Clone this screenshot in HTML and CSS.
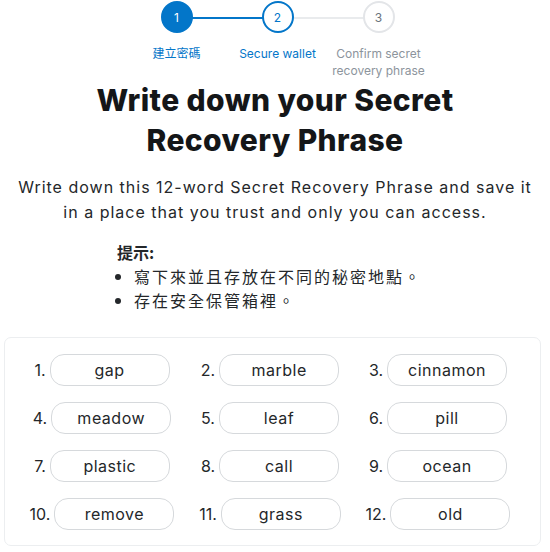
FILE: index.html
```html
<!DOCTYPE html>
<html lang="zh-Hant">
<head>
<meta charset="utf-8">
<title>Write down your Secret Recovery Phrase</title>
<link rel="stylesheet" href="styles.css">
</head>
<body>
<div class="page">
  <div class="stepper">
    <div class="step done">
      <div class="circle">1</div>
      <div class="label">建立密碼</div>
    </div>
    <div class="step active">
      <div class="circle">2</div>
      <div class="label">Secure wallet</div>
    </div>
    <div class="step todo">
      <div class="circle">3</div>
      <div class="label">Confirm secret recovery phrase</div>
    </div>
  </div>

  <h1 class="title">Write down your Secret<br>Recovery Phrase</h1>
  <p class="subtitle">Write down this 12-word Secret Recovery Phrase and save it in a place that you trust and only you can access.</p>

  <div class="tips">
    <div class="tips-head">提示:</div>
    <ul class="tips-list">
      <li>寫下來並且存放在不同的秘密地點。</li>
      <li>存在安全保管箱裡。</li>
    </ul>
  </div>

  <div class="phrase-card">
    <div class="chip"><span class="num">1.</span><span class="word">gap</span></div>
    <div class="chip"><span class="num">2.</span><span class="word">marble</span></div>
    <div class="chip"><span class="num">3.</span><span class="word">cinnamon</span></div>
    <div class="chip"><span class="num">4.</span><span class="word">meadow</span></div>
    <div class="chip"><span class="num">5.</span><span class="word">leaf</span></div>
    <div class="chip"><span class="num">6.</span><span class="word">pill</span></div>
    <div class="chip"><span class="num">7.</span><span class="word">plastic</span></div>
    <div class="chip"><span class="num">8.</span><span class="word">call</span></div>
    <div class="chip"><span class="num">9.</span><span class="word">ocean</span></div>
    <div class="chip"><span class="num">10.</span><span class="word">remove</span></div>
    <div class="chip"><span class="num">11.</span><span class="word">grass</span></div>
    <div class="chip"><span class="num">12.</span><span class="word">old</span></div>
  </div>
</div>
</body>
</html>
```

FILE: styles.css
```css
html, body {
  margin: 0;
  padding: 0;
  background: #ffffff;
}

body {
  font-family: "Inter", "Noto Sans CJK TC", sans-serif;
  color: #24272a;
}

.page {
  width: 550px;
  display: flex;
  flex-direction: column;
  align-items: center;
}

/* Stepper */
.stepper {
  display: flex;
  justify-content: center;
  padding-top: 1px;
  margin-left: 5px;
}

.step {
  width: 101px;
  display: flex;
  flex-direction: column;
  align-items: center;
  position: relative;
}

.step + .step::before {
  content: "";
  position: absolute;
  top: 16px;
  left: -50%;
  right: 50%;
  height: 2px;
  background: #e9ebed;
  z-index: 0;
}

.step.active::before {
  background: #0376c9;
}

.circle {
  position: relative;
  z-index: 1;
  width: 28px;
  height: 28px;
  border-radius: 50%;
  border: 2px solid #0376c9;
  background: #ffffff;
  color: #0376c9;
  font-size: 12px;
  display: flex;
  align-items: center;
  justify-content: center;
}

.done .circle {
  background: #0376c9;
  color: #ffffff;
}

.todo .circle {
  border-color: #e3e5e8;
  color: #6a737d;
}

.label {
  margin-top: 12px;
  font-size: 12px;
  line-height: 17px;
  text-align: center;
  color: #0376c9;
  width: 96px;
}

.todo .label {
  color: #8c949c;
}

/* Heading */
.title {
  margin: 1px 0 0;
  font-size: 30px;
  line-height: 40px;
  font-weight: 800;
  letter-spacing: 0.4px;
  text-align: center;
  color: #141618;
}

.subtitle {
  margin: 15px 0 0;
  width: 524px;
  font-size: 16px;
  line-height: 25px;
  letter-spacing: 1px;
  text-align: center;
  color: #24272a;
}

/* Tips */
.tips {
  align-self: flex-start;
  margin: 15px 0 0 117px;
  font-size: 16px;
  line-height: 24px;
  font-family: "Noto Sans CJK TC", sans-serif;
  letter-spacing: 2px;
}

.tips-head {
  font-weight: 700;
  letter-spacing: 0;
}

.tips-list {
  margin: 0;
  padding: 0 0 0 17px;
  list-style: disc;
}

/* Phrase card */
.phrase-card {
  align-self: flex-start;
  margin: 25px 0 0 4px;
  width: 537px;
  box-sizing: border-box;
  border: 1px solid #eceef0;
  border-radius: 7px;
  padding: 16px 18px 15px 13px;
  display: grid;
  grid-template-columns: repeat(3, 1fr);
  row-gap: 16px;
}

.chip {
  display: flex;
  align-items: center;
  justify-content: center;
}

.num {
  font-size: 16px;
  margin-right: 4px;
}

.word {
  width: 118px;
  height: 30px;
  border: 1px solid #d6d9dc;
  border-radius: 14px;
  display: flex;
  align-items: center;
  justify-content: center;
  font-size: 16px;
  letter-spacing: 0.5px;
}
```
